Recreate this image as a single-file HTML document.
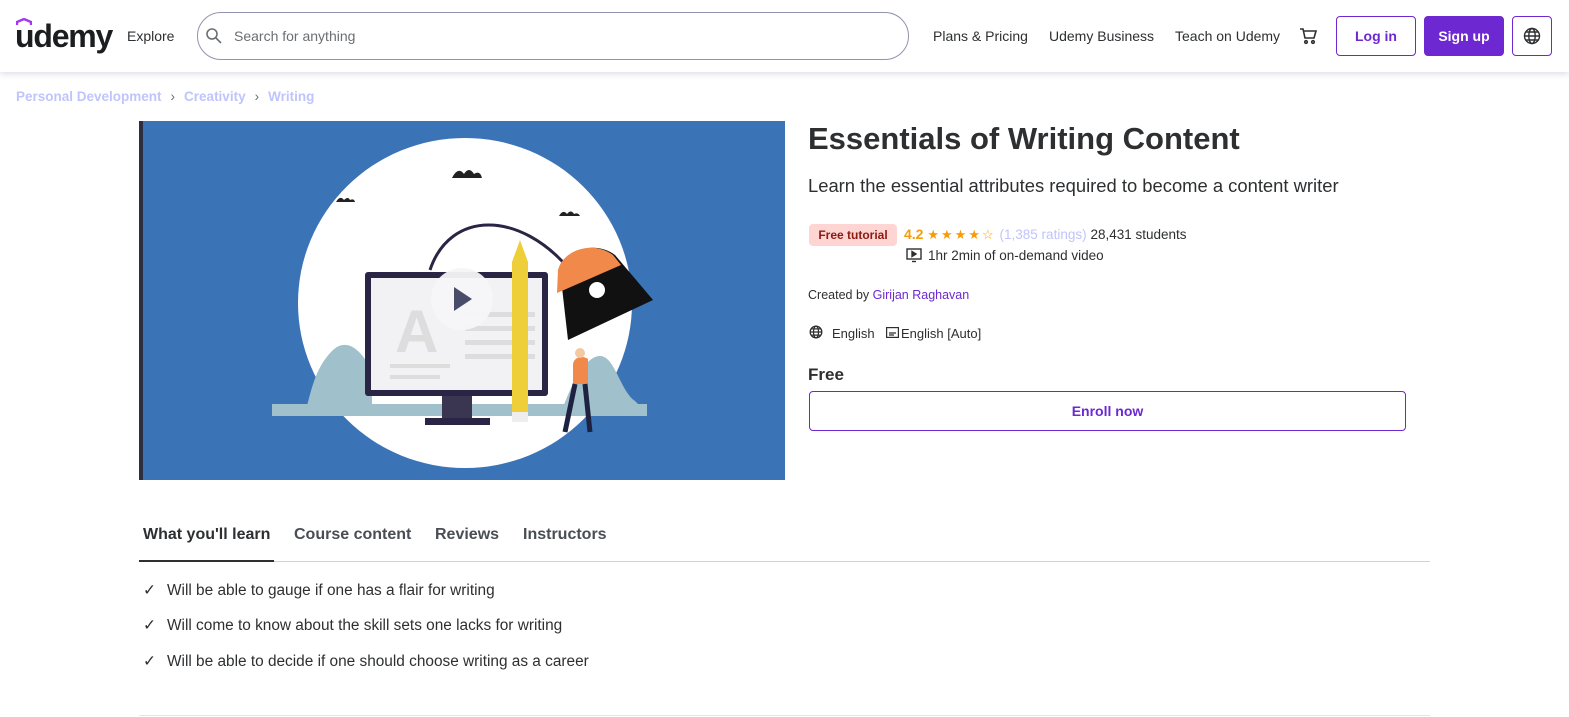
<!DOCTYPE html>
<html><head><meta charset="utf-8"><style>
*{margin:0;padding:0;box-sizing:border-box}
body{width:1569px;height:717px;background:#fff;font-family:"Liberation Sans",sans-serif;color:#2d2f31;position:relative;overflow:hidden}
.a{position:absolute;white-space:nowrap}
.hdr{position:absolute;left:0;top:0;width:1569px;height:72px;background:#fff;box-shadow:0 2px 6px rgba(60,60,120,.18)}
.nav{font-size:14px;color:#2d2f31;top:28px}
.btn{position:absolute;top:16px;height:40px;border:1px solid #6d28d2;border-radius:4px;font-weight:bold;font-size:14px;display:flex;align-items:center;justify-content:center}
.tab{font-size:16px;font-weight:bold;color:#4a4d55;top:526px}
.li{font-size:15.4px;color:#2d2f31}
</style></head><body>
<div class="hdr"></div>
<div class="a" style="left:15px;top:18px;font-size:32px;font-weight:bold;letter-spacing:-1.2px;color:#1c1d1f">udemy</div>
<svg class="a" style="left:16px;top:18px" width="16" height="8" viewBox="0 0 16 8"><path d="M1 7V4L8 1l7 3v3" fill="none" stroke="#a435f0" stroke-width="2.4"/></svg>
<div class="a nav" style="left:127px">Explore</div>
<div class="a" style="left:197px;top:12px;width:712px;height:48px;border:1px solid #9194ac;border-radius:24px"></div>
<svg class="a" style="left:205px;top:27px" width="18" height="18" viewBox="0 0 18 18"><circle cx="7" cy="7" r="5" fill="none" stroke="#6a6f73" stroke-width="1.6"/><path d="M11 11l5 5" stroke="#6a6f73" stroke-width="1.6"/></svg>
<div class="a" style="left:234px;top:28px;font-size:14px;color:#6a6f73">Search for anything</div>
<div class="a nav" style="left:933px">Plans &amp; Pricing</div>
<div class="a nav" style="left:1049px">Udemy Business</div>
<div class="a nav" style="left:1175px">Teach on Udemy</div>
<svg class="a" style="left:1298px;top:26px" width="20" height="20" viewBox="0 0 20 20" fill="none" stroke="#2d2f31" stroke-width="1.6"><path d="M2 3h3l2 9h9l2-7H6"/><circle cx="8" cy="16" r="1.3"/><circle cx="15" cy="16" r="1.3"/></svg>
<div class="btn" style="left:1336px;width:80px;color:#6d28d2">Log in</div>
<div class="btn" style="left:1424px;width:80px;background:#6d28d2;color:#fff">Sign up</div>
<div class="btn" style="left:1512px;width:40px"><svg width="18" height="18" viewBox="0 0 18 18" fill="none" stroke="#2d2f31" stroke-width="1.4"><circle cx="9" cy="9" r="7.5"/><ellipse cx="9" cy="9" rx="3.2" ry="7.5"/><path d="M1.5 9h15M3 5h12M3 13h12"/></svg></div>

<div class="a" style="left:16px;top:89px;font-size:13.5px;font-weight:bold;color:#c0c4fc">Personal Development<span style="color:#6a6f73;font-weight:normal;margin:0 9px">›</span>Creativity<span style="color:#6a6f73;font-weight:normal;margin:0 9px">›</span>Writing</div>

<div class="a" style="left:139px;top:121px;width:646px;height:359px;background:#3a74b6;border-left:4px solid #2d2f40;overflow:hidden">
<svg width="646" height="359" viewBox="139 121 646 359" style="display:block;margin-left:-4px">
<ellipse cx="465" cy="303" rx="167" ry="165" fill="#fff"/>
<path d="M272 416 c10-10 25-5 35-10 c5-20 10-40 25-55 c15-15 30 0 40 20 v45z" fill="#a0c0cc"/>
<path d="M560 416 c10-30 25-60 40-60 c15 0 20 35 35 45 c5 5 10 10 12 15z" fill="#a0c0cc"/>
<rect x="272" y="404" width="375" height="12" fill="#a0c0cc"/>
<path d="M430 270 c20-60 90-60 140 0" fill="none" stroke="#2a2545" stroke-width="3"/>
<rect x="365" y="272" width="183" height="124" rx="3" fill="#2a2545"/>
<rect x="371" y="278" width="171" height="112" fill="#f2f2f4"/>
<text x="395" y="352" font-size="60" fill="#ddd" font-family="Liberation Sans" font-weight="bold">A</text>
<rect x="465" y="312" width="70" height="5" fill="#ddd"/><rect x="465" y="326" width="70" height="5" fill="#ddd"/><rect x="465" y="340" width="70" height="5" fill="#ddd"/><rect x="465" y="354" width="70" height="5" fill="#ddd"/><rect x="390" y="364" width="60" height="4" fill="#ddd"/><rect x="390" y="375" width="50" height="4" fill="#ddd"/>
<rect x="442" y="396" width="30" height="22" fill="#3a3550"/><rect x="425" y="418" width="65" height="7" fill="#2a2545"/>
<path d="M512 262 l8-22 l8 22 v150 h-16z" fill="#eecf3a"/><rect x="512" y="412" width="16" height="10" fill="#eee"/>
<path d="M560 270 c5-20 35-30 55-15 l38 45 l-85 40z" fill="#111"/>
<path d="M558 270 c5-20 35-30 55-15 l8 10 l-64 28z" fill="#f0894a"/>
<circle cx="597" cy="290" r="8" fill="#fff"/>
<path d="M573 365 c0-8 10-10 15-6 v25 h-15z" fill="#f0894a"/><circle cx="580" cy="353" r="5" fill="#f2c9a0"/>
<path d="M575 384 l-10 48 M585 384 l5 48" stroke="#1e2140" stroke-width="5"/>
<path d="M452 178 q6-12 12-4 q5-8 10 0 q6-4 8 4z" fill="#222"/>
<path d="M336 202 q4-7 8-2 q4-4 6 0 q4-2 5 2z" fill="#222"/>
<path d="M559 216 q4-7 8-2 q4-5 7 0 q4-2 6 2z" fill="#222"/>
<circle cx="462" cy="299" r="31" fill="#f5f6f8" opacity=".95"/>
<path d="M454 287 l18 12 l-18 12z" fill="#4a4d6a"/>
</svg></div>

<div class="a" style="left:808px;top:121px;font-size:31px;font-weight:bold;color:#2d2f31">Essentials of Writing Content</div>
<div class="a" style="left:808px;top:175px;font-size:18.4px;color:#2d2f31">Learn the essential attributes required to become a content writer</div>
<div class="a" style="left:809px;top:224px;width:88px;height:22px;background:#fed5d3;border-radius:4px;color:#8b1a12;font-size:12px;font-weight:bold;line-height:22px;text-align:center">Free tutorial</div>
<div class="a" style="left:904px;top:226px;font-size:14px"><b style="color:#f69c08">4.2</b> <span style="color:#f69c08;font-size:13px;letter-spacing:2px">★★★★☆</span> <span style="color:#c0c4fc;font-size:13.5px">(1,385 ratings)</span> <span style="font-size:13.5px">28,431 students</span></div>
<svg class="a" style="left:906px;top:248px" width="16" height="15" viewBox="0 0 16 15" fill="none" stroke="#2d2f31" stroke-width="1.4"><rect x="1" y="1" width="14" height="10"/><path d="M6 3.5v5l4-2.5z" fill="#2d2f31"/><path d="M6 13.5h4"/></svg>
<div class="a" style="left:928px;top:248px;font-size:13.5px">1hr 2min of on-demand video</div>
<div class="a" style="left:808px;top:288px;font-size:12.5px">Created by <span style="color:#6d28d2">Girijan Raghavan</span></div>
<svg class="a" style="left:809px;top:325px" width="14" height="14" viewBox="0 0 18 18" fill="none" stroke="#2d2f31" stroke-width="1.6"><circle cx="9" cy="9" r="7.5"/><ellipse cx="9" cy="9" rx="3.2" ry="7.5"/><path d="M1.5 9h15M3 5h12M3 13h12"/></svg>
<div class="a" style="left:832px;top:326px;font-size:13px">English</div>
<svg class="a" style="left:886px;top:327px" width="13" height="11" viewBox="0 0 13 11" fill="none" stroke="#2d2f31" stroke-width="1.2"><rect x=".6" y=".6" width="11.8" height="9.8"/><path d="M3 6h7M3 8h5"/></svg>
<div class="a" style="left:901px;top:326px;font-size:13px">English [Auto]</div>
<div class="a" style="left:808px;top:365px;font-size:17px;font-weight:bold">Free</div>
<div class="a" style="left:809px;top:391px;width:597px;height:40px;border:1px solid #6d28d2;border-radius:4px;color:#6d28d2;font-weight:bold;font-size:14px;line-height:38px;text-align:center">Enroll now</div>

<div class="a tab" style="left:143px;color:#2d2f31">What you'll learn</div>
<div class="a tab" style="left:294px">Course content</div>
<div class="a tab" style="left:435px">Reviews</div>
<div class="a tab" style="left:523px">Instructors</div>
<div class="a" style="left:139px;top:561px;width:1291px;height:1px;background:#d1d2e0"></div>
<div class="a" style="left:139px;top:560px;width:135px;height:2px;background:#2d2f31"></div>
<div class="a li" style="left:143px;top:581px">✓</div><div class="a li" style="left:167px;top:582px">Will be able to gauge if one has a flair for writing</div>
<div class="a li" style="left:143px;top:616px">✓</div><div class="a li" style="left:167px;top:617px">Will come to know about the skill sets one lacks for writing</div>
<div class="a li" style="left:143px;top:652px">✓</div><div class="a li" style="left:167px;top:653px">Will be able to decide if one should choose writing as a career</div>
<div class="a" style="left:139px;top:715px;width:1291px;height:1px;background:#e4e5ea"></div>
</body></html>
